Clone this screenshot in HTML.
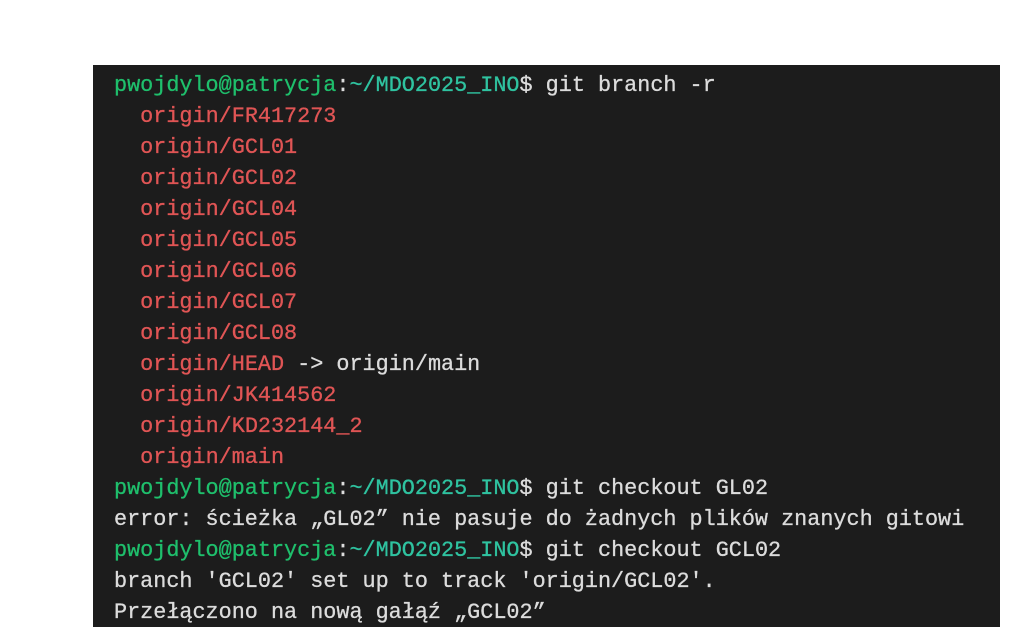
<!DOCTYPE html>
<html><head><meta charset="utf-8"><style>
html,body{margin:0;padding:0;background:#fff;width:1026px;height:627px;overflow:hidden}
.t{position:absolute;left:93px;top:65px;width:907px;height:562px;background:#1c1c1c}
pre{margin:0;position:absolute;left:114px;top:70px;font-family:"Liberation Mono","DejaVu Sans Mono",monospace;font-size:21.8px;line-height:31px;color:#dcdcdc;white-space:pre;-webkit-text-stroke:0.3px currentColor}
.g{color:#1fbf6c}.b{color:#2fc3a0}.r{color:#e05555}
</style></head><body>
<div class="t"></div>
<pre><span class="g">pwojdylo@patrycja</span>:<span class="b">~/MDO2025_INO</span>$ git branch -r
  <span class="r">origin/FR417273</span>
  <span class="r">origin/GCL01</span>
  <span class="r">origin/GCL02</span>
  <span class="r">origin/GCL04</span>
  <span class="r">origin/GCL05</span>
  <span class="r">origin/GCL06</span>
  <span class="r">origin/GCL07</span>
  <span class="r">origin/GCL08</span>
  <span class="r">origin/HEAD</span> -&gt; origin/main
  <span class="r">origin/JK414562</span>
  <span class="r">origin/KD232144_2</span>
  <span class="r">origin/main</span>
<span class="g">pwojdylo@patrycja</span>:<span class="b">~/MDO2025_INO</span>$ git checkout GL02
error: ścieżka „GL02” nie pasuje do żadnych plików znanych gitowi
<span class="g">pwojdylo@patrycja</span>:<span class="b">~/MDO2025_INO</span>$ git checkout GCL02
branch 'GCL02' set up to track 'origin/GCL02'.
Przełączono na nową gałąź „GCL02”</pre>
</body></html>
